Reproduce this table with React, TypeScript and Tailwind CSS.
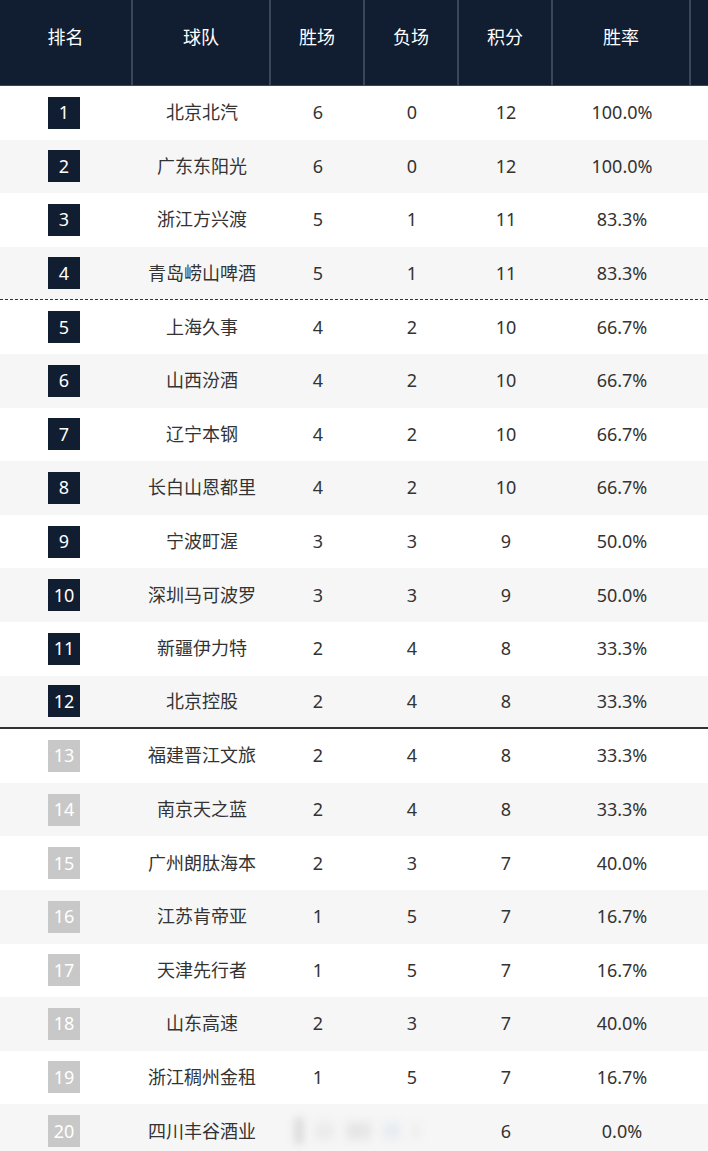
const columns = ["排名", "球队", "胜场", "负场", "积分", "胜率"];

type Row = { team: string; w: number; l: number; pts: number; pct: string };

const rows: Row[] = [
  { team: "北京北汽", w: 6, l: 0, pts: 12, pct: "100.0%" },
  { team: "广东东阳光", w: 6, l: 0, pts: 12, pct: "100.0%" },
  { team: "浙江方兴渡", w: 5, l: 1, pts: 11, pct: "83.3%" },
  { team: "青岛崂山啤酒", w: 5, l: 1, pts: 11, pct: "83.3%" },
  { team: "上海久事", w: 4, l: 2, pts: 10, pct: "66.7%" },
  { team: "山西汾酒", w: 4, l: 2, pts: 10, pct: "66.7%" },
  { team: "辽宁本钢", w: 4, l: 2, pts: 10, pct: "66.7%" },
  { team: "长白山恩都里", w: 4, l: 2, pts: 10, pct: "66.7%" },
  { team: "宁波町渥", w: 3, l: 3, pts: 9, pct: "50.0%" },
  { team: "深圳马可波罗", w: 3, l: 3, pts: 9, pct: "50.0%" },
  { team: "新疆伊力特", w: 2, l: 4, pts: 8, pct: "33.3%" },
  { team: "北京控股", w: 2, l: 4, pts: 8, pct: "33.3%" },
  { team: "福建晋江文旅", w: 2, l: 4, pts: 8, pct: "33.3%" },
  { team: "南京天之蓝", w: 2, l: 4, pts: 8, pct: "33.3%" },
  { team: "广州朗肽海本", w: 2, l: 3, pts: 7, pct: "40.0%" },
  { team: "江苏肯帝亚", w: 1, l: 5, pts: 7, pct: "16.7%" },
  { team: "天津先行者", w: 1, l: 5, pts: 7, pct: "16.7%" },
  { team: "山东高速", w: 2, l: 3, pts: 7, pct: "40.0%" },
  { team: "浙江稠州金租", w: 1, l: 5, pts: 7, pct: "16.7%" },
  { team: "四川丰谷酒业", w: 0, l: 6, pts: 6, pct: "0.0%" },
];

const grid = "grid grid-cols-[133px_138px_94px_94px_94px_138px_1fr]";

export default function App() {
  return (
    <div
      className="w-[708px] overflow-hidden bg-white text-[18px] text-[#333]"
      style={{ fontFamily: '"Noto Sans", "Noto Sans CJK SC", sans-serif' }}
    >
      <div className={`${grid} h-[86px] border-b border-[#3b4658] bg-[#111d30] text-white`}>
        {columns.map((c) => (
          <div key={c} className="border-r-2 border-[#3b4658] pt-[25px] text-center leading-6">
            {c}
          </div>
        ))}
        <div />
      </div>

      {rows.map((r, i) => {
        const rank = i + 1;
        const top = rank <= 12;
        let edge = "";
        if (rank === 4) edge = "border-b border-dashed border-[#333]";
        if (rank === 12) edge = "border-b-2 border-[#333]";
        return (
          <div
            key={r.team}
            className={`${grid} h-[53.6px] items-center ${i % 2 ? "bg-[#f6f6f6]" : "bg-white"} ${edge}`}
          >
            <div className="flex justify-center pr-[5px]">
              <span
                className={`flex h-[32px] w-[32px] items-center justify-center text-white ${
                  top ? "bg-[#111d30]" : "bg-[#c8c8c8]"
                }`}
              >
                {rank}
              </span>
            </div>
            <div className="text-center">{r.team}</div>
            {rank === 20 ? (
              <div className="col-span-2 flex h-full items-center pl-[24px]">
                <div className="flex h-[26px] w-[124px] items-center gap-[12px] blur-[4px]">
                  <span className="h-full w-[10px] bg-[#d6d6d6]" />
                  <span className="h-[18px] w-[22px] bg-[#ebebeb]" />
                  <span className="h-[18px] w-[30px] bg-[#e6e6e6]" />
                  <span className="h-[18px] w-[20px] bg-[#e8ecf2]" />
                  <span className="h-[14px] w-[8px] bg-[#ececec]" />
                </div>
              </div>
            ) : (
              <>
                <div className="text-center">{r.w}</div>
                <div className="text-center">{r.l}</div>
              </>
            )}
            <div className="text-center">{r.pts}</div>
            <div className="text-center">{r.pct}</div>
            <div />
          </div>
        );
      })}
    </div>
  );
}
